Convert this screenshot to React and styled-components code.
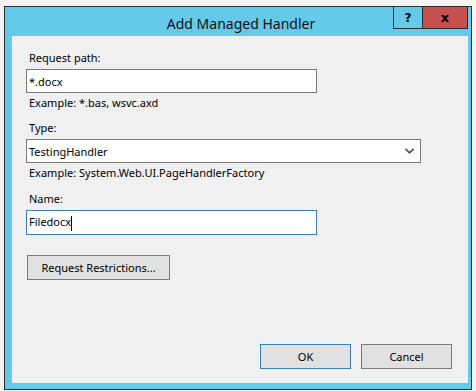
import React from "react";
import styled, { createGlobalStyle } from "styled-components";

const Global = createGlobalStyle`
  html, body { margin: 0; padding: 0; }
  body {
    background: #f4f4f4;
    font-family: "Noto Sans", "Open Sans", sans-serif;
    width: 476px;
    height: 391px;
    overflow: hidden;
  }
`;

const Window = styled.div`
  position: relative;
  box-sizing: border-box;
  margin: 6px 0 0 4px;
  width: 468px;
  height: 384px;
  border: 1px solid #2d2d2d;
  background: #65c9e9;
  display: flex;
  flex-direction: column;
  padding: 0 3px 6px 7px;
`;

const TitleBar = styled.div`
  height: 29px;
  display: flex;
  align-items: center;
  justify-content: center;
  font-size: 14px;
  color: #111;
`;

const Title = styled.span`
  margin-left: 2px;
  margin-top: 3px;
`;

const Caption = styled.div`
  position: absolute;
  top: -1px;
  right: 3px;
  display: flex;
  height: 23px;
`;

const CaptionButton = styled.div`
  box-sizing: border-box;
  height: 23px;
  width: ${(p) => p.$w}px;
  background: ${(p) => (p.$close ? "#c75050" : "#65c9e9")};
  border: 1px solid #2d2d2d;
  border-left-width: ${(p) => (p.$close ? 0 : 1)}px;
  display: flex;
  align-items: center;
  justify-content: center;
  font-family: "DejaVu Sans", sans-serif;
  font-weight: bold;
  font-size: ${(p) => (p.$close ? 13 : 12)}px;
  color: #000;
`;

const Client = styled.div`
  flex: 1;
  background: #f0f0f0;
  display: flex;
  flex-direction: column;
  padding: 14px 16px 14px 14px;
  box-sizing: border-box;
`;

const Label = styled.div`
  font-size: 11px;
  line-height: 16px;
  color: #000;
  padding-left: 3px;
  margin-top: ${(p) => p.$mt || 0}px;
`;

const Field = styled.div`
  box-sizing: border-box;
  margin-top: 3px;
  width: ${(p) => p.$w}px;
  height: ${(p) => p.$h || 24}px;
  background: #fff;
  border: 1px solid ${(p) => (p.$focused ? "#3c7fb1" : "#7a7a7a")};
  display: flex;
  align-items: center;
  padding: 0 2px 0 2px;
  font-size: 11px;
  color: #000;
`;

const FieldText = styled.span`
  flex: 1;
  white-space: nowrap;
`;

const Caret = styled.span`
  display: inline-block;
  width: 1px;
  height: 15px;
  background: #000;
  vertical-align: middle;
`;

const Chevron = styled.svg`
  width: 9px;
  height: 6px;
  margin-right: 4px;
`;

const Button = styled.div`
  box-sizing: border-box;
  height: 25px;
  width: ${(p) => p.$w}px;
  background: #e1e1e1;
  border: 1px solid ${(p) => (p.$default ? "#3c7fb1" : "#7a7a7a")};
  display: flex;
  align-items: center;
  justify-content: center;
  font-size: 11px;
  color: #000;
`;

const RestrictRow = styled.div`
  margin-top: 20px;
  padding-left: 1px;
`;

const Spacer = styled.div`
  flex: 1;
`;

const Footer = styled.div`
  display: flex;
  justify-content: flex-end;
  gap: 10px;
`;

export default function App() {
  return (
    <>
      <Global />
      <Window>
        <TitleBar>
          <Title>Add Managed Handler</Title>
        </TitleBar>
        <Caption>
          <CaptionButton $w={30}>?</CaptionButton>
          <CaptionButton $w={45} $close>
            x
          </CaptionButton>
        </Caption>
        <Client>
          <Label>Request path:</Label>
          <Field $w={291}>
            <FieldText>*.docx</FieldText>
          </Field>
          <Label $mt={2}>Example: *.bas, wsvc.axd</Label>
          <Label $mt={9}>Type:</Label>
          <Field $w={395} $h={24}>
            <FieldText>TestingHandler</FieldText>
            <Chevron viewBox="0 0 9 6">
              <path d="M0.5 0.8 L4.5 4.8 L8.5 0.8" fill="none" stroke="#555" strokeWidth="1.8" />
            </Chevron>
          </Field>
          <Label $mt={2}>Example: System.Web.UI.PageHandlerFactory</Label>
          <Label $mt={10}>Name:</Label>
          <Field $w={291} $h={25} $focused>
            <FieldText>
              Filedocx
              <Caret />
            </FieldText>
          </Field>
          <RestrictRow>
            <Button $w={143}>Request Restrictions...</Button>
          </RestrictRow>
          <Spacer />
          <Footer>
            <Button $w={91} $default>
              OK
            </Button>
            <Button $w={91}>Cancel</Button>
          </Footer>
        </Client>
      </Window>
    </>
  );
}
